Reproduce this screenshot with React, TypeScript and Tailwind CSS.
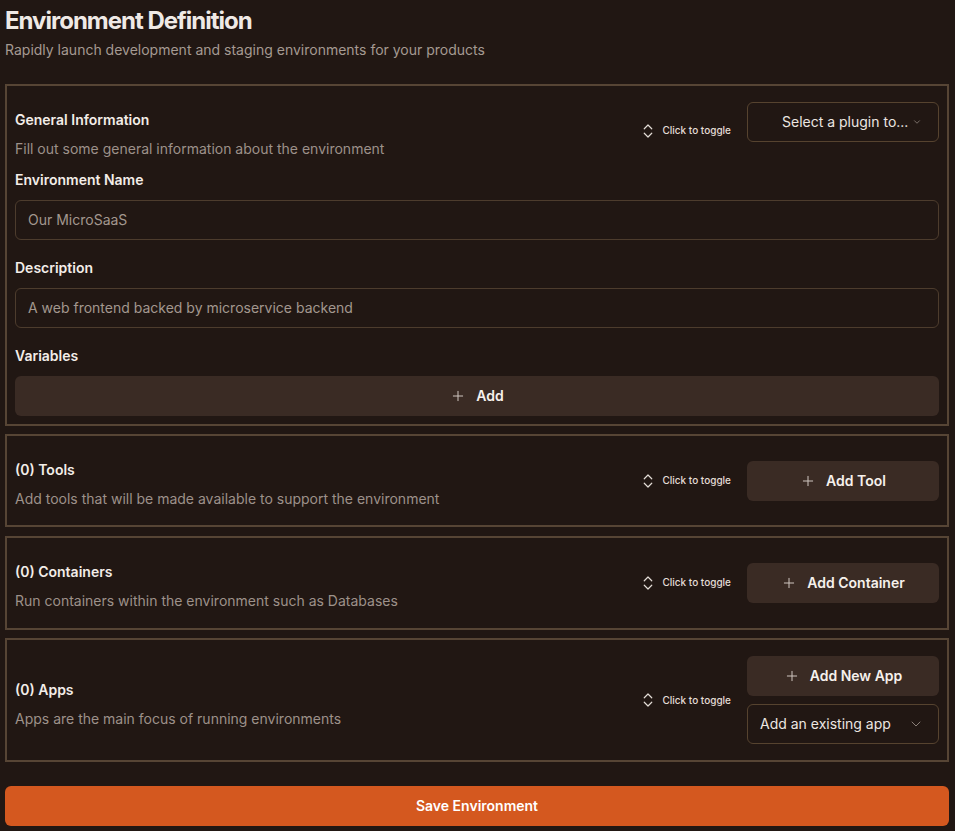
import { ChevronsUpDown, ChevronDown, Plus } from 'lucide-react';
import type { ReactNode } from 'react';

function Toggle() {
  return (
    <div className="flex items-center gap-[5px] self-center text-[10px] font-medium text-[#e4ddd7]">
      <ChevronsUpDown className="w-[18px] h-[18px] text-[#e4ddd7]" strokeWidth={1.6} />
      <span>Click to toggle</span>
    </div>
  );
}

function ActionButton({ label }: { label: string }) {
  return (
    <button className="w-[192px] h-10 rounded-md bg-[#3a2b24] flex items-center justify-center gap-[10px] text-sm font-semibold text-[#f6f1ec]">
      <Plus className="w-4 h-4 text-[#cfc6bf]" strokeWidth={1.5} />
      <span>{label}</span>
    </button>
  );
}

function SectionHeader({ title, desc, right }: { title: string; desc: string; right: ReactNode }) {
  return (
    <div className="flex items-center justify-between">
      <div className="pt-2 flex flex-col gap-[9px]">
        <div className="text-sm leading-5 font-semibold text-[#f3ede8]">{title}</div>
        <div className="text-sm leading-5 text-[#9d918a]">{desc}</div>
      </div>
      <div className="flex items-center gap-4">
        <Toggle />
        {right}
      </div>
    </div>
  );
}

export default function App() {
  return (
    <div
      className="min-h-[831px] bg-[#211713] pl-[5px] pr-[6px] pt-[5px] pb-[5px]"
      style={{ fontFamily: 'Inter, "Noto Sans", sans-serif' }}
    >
      <h1 className="text-2xl leading-8 font-bold tracking-[-1px] text-[#efe9e5]">Environment Definition</h1>
      <p className="mt-[3px] text-sm leading-5 text-[#a59a92]">
        Rapidly launch development and staging environments for your products
      </p>

      <div className="mt-6 flex flex-col gap-2">
        {/* General info */}
        <div className="border-2 border-[#574535] px-2 pt-4 pb-2">
          <div className="flex items-start justify-between">
            <div className="pt-2 flex flex-col gap-[9px]">
              <div className="text-sm leading-5 font-semibold text-[#f3ede8]">General Information</div>
              <div className="text-sm leading-5 text-[#9d918a]">Fill out some general information about the environment</div>
            </div>
            <div className="flex items-start gap-4 self-stretch">
              <Toggle />
              <button className="w-[192px] h-10 rounded-md border border-[#56432f] flex items-center justify-between pl-[34px] pr-[16px] text-sm text-[#ece6e1]">
                <span>Select a plugin to...</span>
                <ChevronDown className="w-[10px] h-[10px] text-[#8a7f78]" />
              </button>
            </div>
          </div>

          <div className="mt-[11px] text-sm leading-5 font-semibold text-[#f3ede8]">Environment Name</div>
          <div className="mt-[10px] h-10 rounded-md border border-[#4d3c2d] flex items-center px-3 text-sm text-[#a3978f]">
            Our MicroSaaS
          </div>

          <div className="mt-[18px] text-sm leading-5 font-semibold text-[#f3ede8]">Description</div>
          <div className="mt-[10px] h-10 rounded-md border border-[#4d3c2d] flex items-center px-3 text-sm text-[#a3978f]">
            A web frontend backed by microservice backend
          </div>

          <div className="mt-[18px] text-sm leading-5 font-semibold text-[#f3ede8]">Variables</div>
          <button className="mt-[10px] w-full h-10 rounded-md bg-[#3a2b24] flex items-center justify-center gap-[10px] text-sm font-semibold text-[#f6f1ec]">
            <Plus className="w-4 h-4 text-[#cfc6bf]" strokeWidth={1.5} />
            <span>Add</span>
          </button>
        </div>

        {/* Tools */}
        <div className="border-2 border-[#574535] px-2 py-4">
          <SectionHeader
            title="(0) Tools"
            desc="Add tools that will be made available to support the environment"
            right={<ActionButton label="Add Tool" />}
          />
        </div>

        {/* Containers */}
        <div className="mt-px border-2 border-[#574535] px-2 pt-4 pb-[17px]">
          <SectionHeader
            title="(0) Containers"
            desc="Run containers within the environment such as Databases"
            right={<ActionButton label="Add Container" />}
          />
        </div>

        {/* Apps */}
        <div className="border-2 border-[#574535] px-2 py-4">
          <SectionHeader
            title="(0) Apps"
            desc="Apps are the main focus of running environments"
            right={
              <div className="flex flex-col gap-2">
                <ActionButton label="Add New App" />
                <button className="w-[192px] h-10 rounded-md border border-[#56432f] flex items-center justify-between pl-3 pr-[14px] text-sm text-[#ece6e1]">
                  <span>Add an existing app</span>
                  <ChevronDown className="w-4 h-4 text-[#8a7f78]" strokeWidth={1.5} />
                </button>
              </div>
            }
          />
        </div>
      </div>

      <button className="mt-6 w-full h-10 rounded-md bg-[#d4581f] text-sm font-semibold text-white">
        Save Environment
      </button>
    </div>
  );
}
